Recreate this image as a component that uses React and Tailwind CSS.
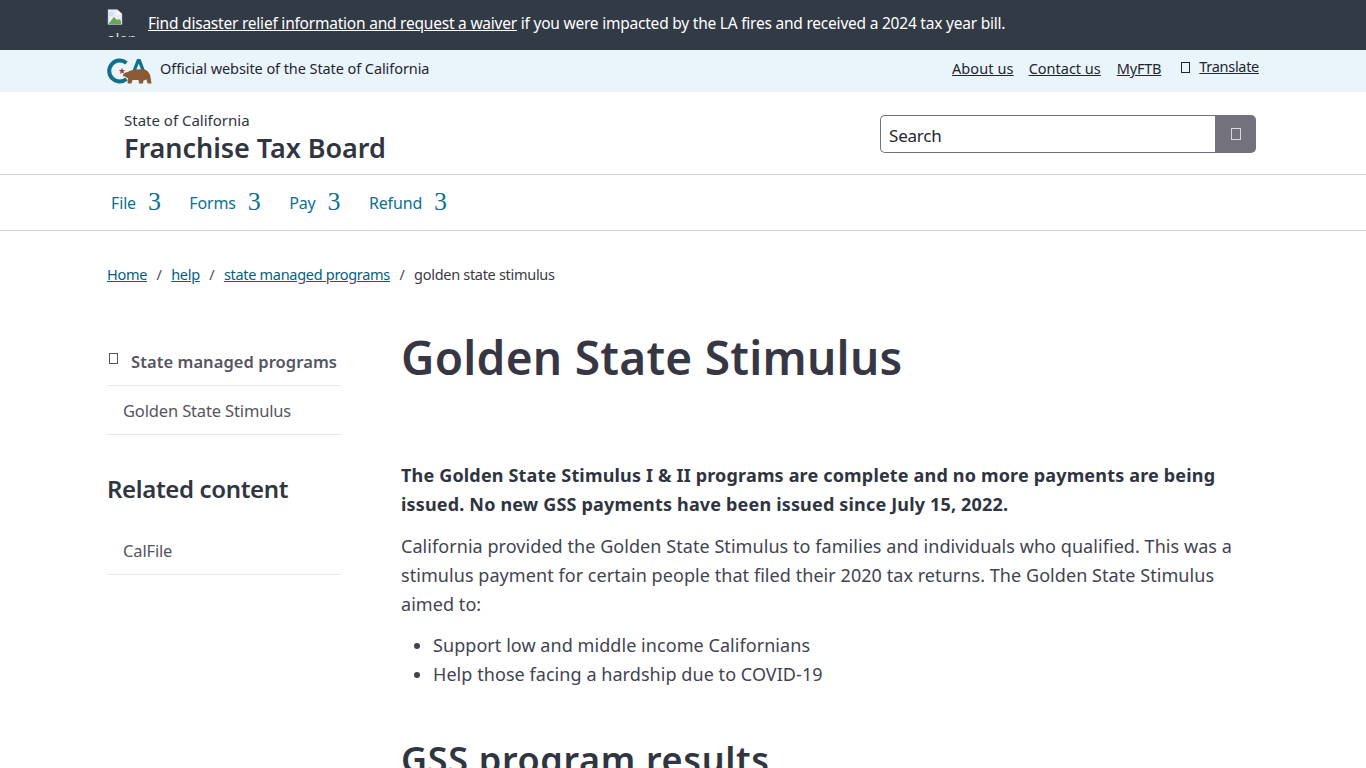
const font = { fontFamily: '"Noto Sans", "Open Sans", sans-serif' };

function Box({ className }) {
  return <span className={"inline-block border border-current " + className} />;
}

function CaLogo() {
  return (
    <svg width="45" height="27" viewBox="0 0 45 27" className="shrink-0">
      <path d="M19.500 5 A10.500 10.500 0 1 0 19.500 21" fill="none" stroke="#12708f" strokeWidth="4" />
      <path d="M15 9.800l.9 2.200 2.300.1-1.800 1.500.6 2.300-2-1.300-2 1.300.6-2.300-1.800-1.500 2.300-.1z" fill="#b5302e" />
      <path d="M25 14 L30 1 L33.500 1 L38.500 14 H35 L31.700 5.500 L28.500 14 Z" fill="#12708f" />
      <path d="M16 17c1-2 3-3 5-3 1-1 3-2 6-2 4-1 9-1 12 0 2 1 3 3 4 5 .7 2 1 5 1.500 8.500h-4l-1-4-3 1-.5 3h-4l-.5-3.500-6 0-1 3.500h-4l.5-5-3-2-2-.5z" fill="#8a5a33" />
    </svg>
  );
}

function BrokenImage() {
  return (
    <div className="relative w-7 h-7 overflow-hidden shrink-0 text-white text-[15px] leading-none">
      <svg width="16" height="16" viewBox="0 0 16 16" className="block">
        <path d="M1 0.500H10L15 5V15.500H1Z" fill="#e8eef4" stroke="#aab" strokeWidth="0.5" />
        <path d="M10 0.500V5H15Z" fill="#fff" />
        <path d="M2 14L7 8l3 3 2-1 2 2v3H2Z" fill="#6aa84f" />
        <path d="M2 3h5v4H2z" fill="#cfe0f5" />
      </svg>
      <div className="mt-[6px] text-[#dfe3e8]">alert</div>
    </div>
  );
}

function NavItem({ label }) {
  return (
    <a className="flex items-baseline gap-3">
      <span className="text-[16px] -translate-y-[1px]">{label}</span>
      <span className="text-[26px] leading-none" style={{ fontFamily: '"Liberation Serif", serif' }}>3</span>
    </a>
  );
}

export default function App() {
  return (
    <div className="h-[768px] overflow-hidden bg-white text-[#30353f]" style={font}>
      <div className="h-[50px] bg-[#323a45] text-white flex items-center pl-[107px] gap-[13px] text-[15.500px]">
        <div className="-mt-[5px]"><BrokenImage /></div>
        <p className="tracking-[-0.22px] -mt-[3px]">
          <a className="underline">Find disaster relief information and request a waiver</a> if you were impacted by the LA fires and received a 2024 tax year bill.
        </p>
      </div>

      <div className="h-[42px] bg-[#eaf5fb] flex items-center justify-between pl-[107px] pr-[107px] text-[14.500px] text-[#1f2630]">
        <div className="flex items-center gap-[8px] tracking-[-0.08px]">
          <CaLogo />
          <span className="pb-1">Official website of the State of California</span>
        </div>
        <div className="flex items-center gap-4 pb-1">
          <a className="underline tracking-[0.1px] -mr-[1px]">About us</a>
          <a className="underline">Contact us</a>
          <a className="underline tracking-[-0.2px]">MyFTB</a>
          <a className="flex items-center -mt-1 ml-[4px]">
            <Box className="w-[9px] h-[11px] mr-[9px]" />
            <span className="underline tracking-[-0.3px]">Translate</span>
          </a>
        </div>
      </div>

      <div className="h-[83px] border-b border-[#d4d4d7] flex items-center justify-between pl-[124px] pr-[110px]">
        <div className="pt-[10px]">
          <div className="text-[15px] leading-[20px]">State of California</div>
          <div className="text-[27px] leading-[36px] font-semibold tracking-[-0.05px]">Franchise Tax Board</div>
        </div>
        <div className="flex w-[376px] h-[38px] mt-[1px]">
          <div className="flex-1 border border-r-0 border-[#72717c] rounded-l-[5px] flex items-center px-2 pt-1 text-[17px] text-[#1f2630] tracking-[-0.2px]">Search</div>
          <div className="w-[41px] bg-[#72717c] rounded-r-[5px] flex items-center justify-center">
            <Box className="w-[10px] h-[12px] text-[#d8d8dc]" />
          </div>
        </div>
      </div>

      <nav className="h-[56px] border-b border-[#d4d4d7] pl-[111px] flex items-center gap-[28.500px] text-[#0d6f92] tracking-[-0.15px] pb-[1px]">
        <NavItem label="File" />
        <NavItem label="Forms" />
        <NavItem label="Pay" />
        <NavItem label="Refund" />
      </nav>

      <div className="pl-[107px] pr-[107px]">
        <div className="flex items-center h-[20px] mt-[34px] text-[14.500px] tracking-[-0.3px]">
          <a className="underline text-[#035e7e]">Home</a>
          <span className="mx-[9.500px] text-[#4b4b52]">/</span>
          <a className="underline text-[#035e7e]">help</a>
          <span className="mx-[9.500px] text-[#4b4b52]">/</span>
          <a className="underline text-[#035e7e]">state managed programs</a>
          <span className="mx-[9.500px] text-[#4b4b52]">/</span>
          <span className="text-[#3a3a42]">golden state stimulus</span>
        </div>

        <div className="flex mt-[46px]">
          <aside className="w-[234px] shrink-0 text-[#55555f] mt-[5px]">
            <div className="h-[50px] border-b border-[#e8e8ea] flex items-center relative pl-6 pt-1 font-semibold text-[16.500px] tracking-[0.07px]">
              <Box className="absolute left-[2px] top-[17px] w-[9px] h-[11px]" />
              State managed programs
            </div>
            <div className="h-[49px] border-b border-[#e8e8ea] flex items-center pl-4 pt-[2px] text-[16.500px] tracking-[-0.15px]">Golden State Stimulus</div>
            <h2 className="mt-[35px] text-[24px] leading-[38px] font-semibold text-[#30353f] tracking-[-0.35px]">Related content</h2>
            <div className="mt-[18px] h-[49px] border-b border-[#e8e8ea] flex items-center pl-4 pt-[2px] text-[16.500px] tracking-[-0.15px]">CalFile</div>
          </aside>

          <main className="ml-[60px] flex-1 text-[18px] leading-[29px] tracking-[0.06px]">
            <h1 className="text-[46px] leading-[56px] font-semibold text-[#373744] tracking-[0.27px] -mt-[2px]">Golden State Stimulus</h1>
            <p className="mt-[76px] font-bold text-[#2e3440] tracking-[0.17px]">The Golden State Stimulus I &amp; II programs are complete and no more payments are being issued. No new GSS payments have been issued since July 15, 2022.</p>
            <p className="mt-[13px] text-[#3f4450]">California provided the Golden State Stimulus to families and individuals who qualified. This was a stimulus payment for certain people that filed their 2020 tax returns. The Golden State Stimulus aimed to:</p>
            <ul className="mt-[12px] pl-8 list-disc text-[#3f4450]">
              <li>Support low and middle income Californians</li>
              <li>Help those facing a hardship due to COVID-19</li>
            </ul>
            <h2 className="mt-[48px] text-[36px] leading-[46px] font-semibold text-[#30353f] tracking-[0.65px]">GSS program results</h2>
          </main>
        </div>
      </div>
    </div>
  );
}
